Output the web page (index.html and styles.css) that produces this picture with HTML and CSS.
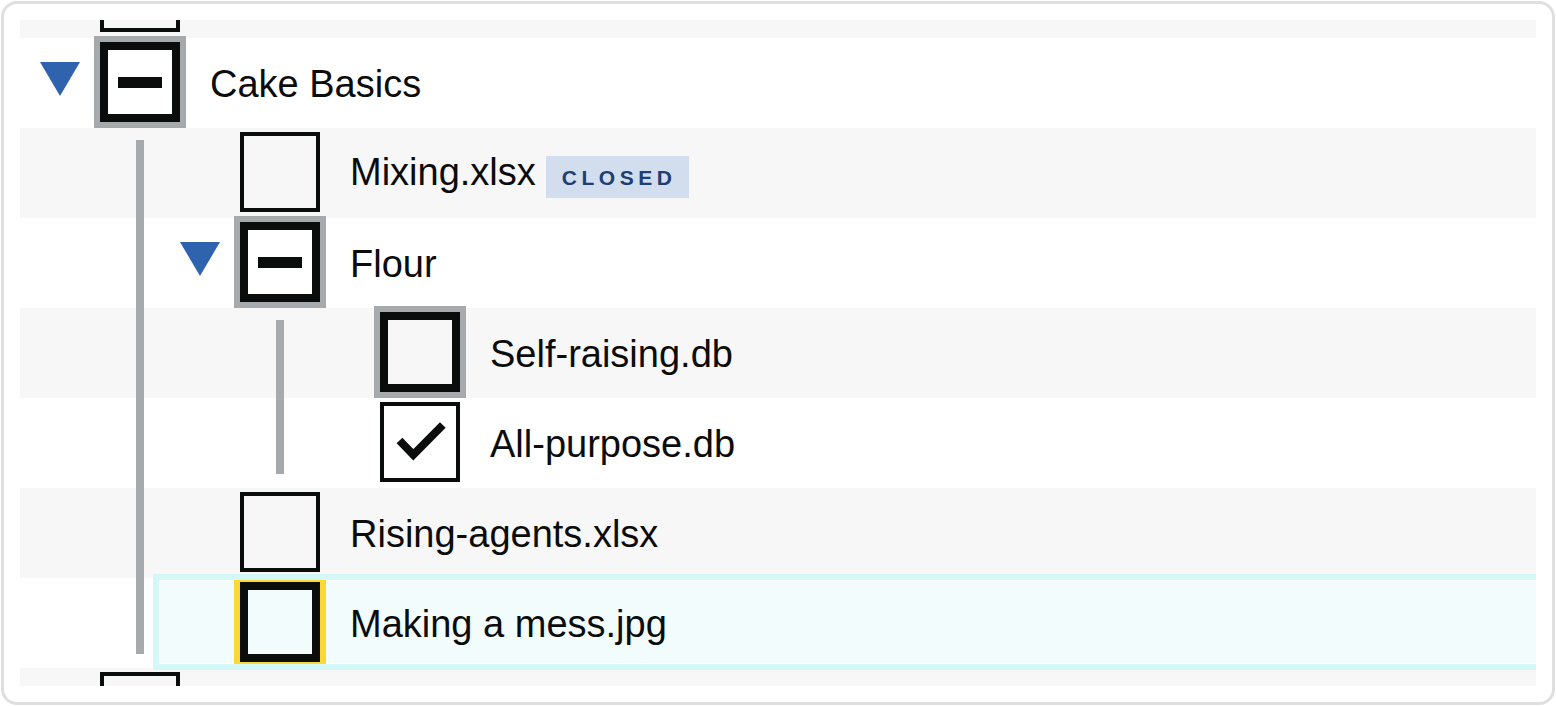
FILE: index.html
```html
<!DOCTYPE html>
<html lang="en">
<head>
<meta charset="utf-8">
<title>Tree view</title>
<link rel="stylesheet" href="styles.css">
</head>
<body>
<div class="frame">
  <div class="viewport">
    <ul class="tree" role="tree">
      <li role="treeitem">
        <div class="row stripe">
          <div class="node lvl-0">
            <span class="toggle"></span>
            <span class="cb"></span>
          </div>
        </div>
      </li>
      <li role="treeitem" aria-expanded="true">
        <div class="row">
          <div class="node lvl-0">
            <span class="toggle"><svg class="tri" width="40" height="34" viewBox="0 0 40 34"><polygon points="0,0 40,0 20,34"/></svg></span>
            <span class="cb thick hover"><span class="dash"></span></span>
            <span class="label"><span class="name">Cake Basics</span></span>
          </div>
        </div>
        <ul class="group g0" role="group">
          <li role="treeitem">
            <div class="row stripe">
              <div class="node lvl-1">
                <span class="toggle"></span>
                <span class="cb"></span>
                <span class="label"><span class="name">Mixing.xlsx</span><span class="tag">Closed</span></span>
              </div>
            </div>
          </li>
          <li role="treeitem" aria-expanded="true">
            <div class="row">
              <div class="node lvl-1">
                <span class="toggle"><svg class="tri" width="40" height="34" viewBox="0 0 40 34"><polygon points="0,0 40,0 20,34"/></svg></span>
                <span class="cb thick hover"><span class="dash"></span></span>
                <span class="label"><span class="name">Flour</span></span>
              </div>
            </div>
            <ul class="group g1" role="group">
              <li role="treeitem">
                <div class="row stripe">
                  <div class="node lvl-2">
                    <span class="toggle"></span>
                    <span class="cb thick hover"></span>
                    <span class="label"><span class="name">Self-raising.db</span></span>
                  </div>
                </div>
              </li>
              <li role="treeitem">
                <div class="row">
                  <div class="node lvl-2">
                    <span class="toggle"></span>
                    <span class="cb"><svg class="check" width="72" height="72" viewBox="0 0 72 72"><polyline points="15.5,34.5 29.3,48.7 58.8,19"/></svg></span>
                    <span class="label"><span class="name">All-purpose.db</span></span>
                  </div>
                </div>
              </li>
            </ul>
          </li>
          <li role="treeitem">
            <div class="row stripe">
              <div class="node lvl-1">
                <span class="toggle"></span>
                <span class="cb"></span>
                <span class="label"><span class="name">Rising-agents.xlsx</span></span>
              </div>
            </div>
          </li>
          <li role="treeitem">
            <div class="row">
              <div class="node lvl-1 focused">
                <span class="toggle"></span>
                <span class="cb thick focus"></span>
                <span class="label"><span class="name">Making a mess.jpg</span></span>
              </div>
            </div>
          </li>
        </ul>
      </li>
      <li role="treeitem">
        <div class="row stripe">
          <div class="node lvl-0">
            <span class="toggle"></span>
            <span class="cb"></span>
          </div>
        </div>
      </li>
    </ul>
  </div>
</div>
</body>
</html>
```

FILE: styles.css
```css
html, body {
  margin: 0;
  padding: 0;
  background: #ffffff;
}

body {
  font-family: "Liberation Sans", Arial, sans-serif;
  color: #0b0c0c;
}

.frame {
  margin: 1px;
  height: 704px;
  box-sizing: border-box;
  border: 3px solid #dfdfdf;
  border-radius: 16px;
  padding: 16px;
  background: #ffffff;
}

.viewport {
  height: 666px;
  overflow: hidden;
}

.tree,
.group {
  list-style: none;
  margin: 0;
  padding: 0;
}

.tree {
  margin-top: -72px;
}

.group {
  position: relative;
}

.group::before {
  content: "";
  position: absolute;
  z-index: 1;
  top: 12px;
  bottom: 14px;
  width: 8px;
  background: #a7aaad;
}

.g0::before {
  left: 116px;
}

.g1::before {
  left: 256px;
}

.row {
  height: 90px;
  box-sizing: border-box;
  padding-top: 3px;
  background: #ffffff;
}

.row.stripe {
  background: #f7f7f7;
}

.node {
  display: flex;
  align-items: center;
  height: 82px;
}

.lvl-0 { margin-left: 0; }
.lvl-1 { margin-left: 140px; }
.lvl-2 { margin-left: 280px; }

.node.focused {
  background: #f2fcfd;
  outline: 6px solid #d4f7f8;
  outline-offset: 1.5px;
}

.toggle {
  flex: none;
  width: 80px;
  height: 82px;
  display: flex;
  align-items: center;
  justify-content: center;
}

.tri {
  display: block;
  margin-top: -6px;
}

.tri polygon {
  fill: #2f63ad;
}

.cb {
  flex: none;
  width: 80px;
  height: 80px;
  box-sizing: border-box;
  border: 4px solid #0b0c0c;
  display: flex;
  align-items: center;
  justify-content: center;
}

.cb.thick {
  border-width: 8px;
}

.cb.hover {
  box-shadow: 0 0 0 6px #a7aaad;
}

.cb.focus {
  box-shadow: 0 0 0 6px #fbd935;
}

.dash {
  display: block;
  width: 44px;
  height: 11px;
  background: #0b0c0c;
}

.check {
  display: block;
}

.check polyline {
  fill: none;
  stroke: #0b0c0c;
  stroke-width: 8;
  stroke-linecap: butt;
  stroke-linejoin: miter;
}

.label {
  display: flex;
  align-items: baseline;
  margin-left: 30px;
  margin-top: 4px;
  font-size: 38px;
  white-space: nowrap;
}

.tag {
  margin-left: 10px;
  padding: 11px 13px 10px 16px;
  font-size: 21px;
  line-height: 21px;
  font-weight: 700;
  letter-spacing: 4.5px;
  text-transform: uppercase;
  color: #1d3f73;
  background: #d2ddee;
}
```
